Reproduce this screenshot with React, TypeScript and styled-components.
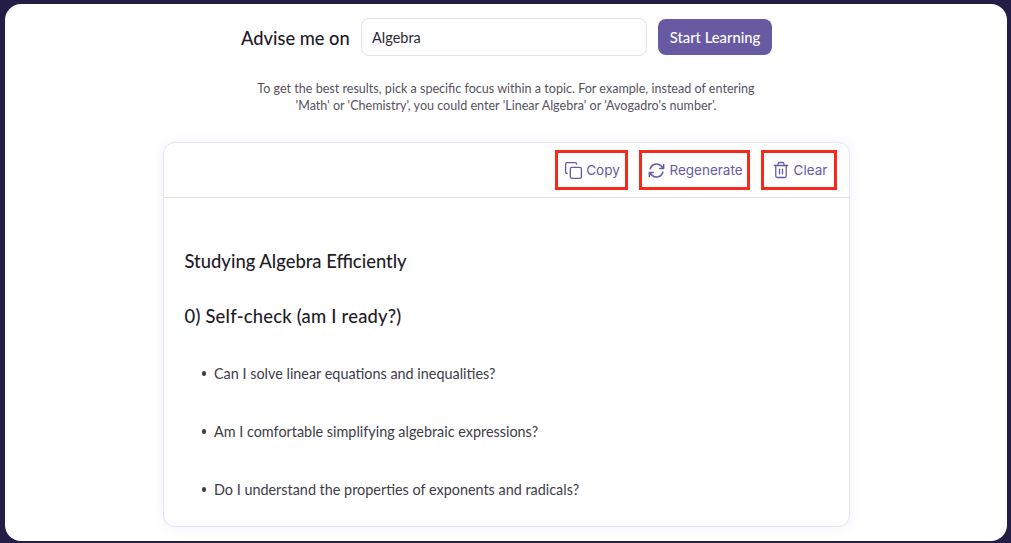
import { HiOutlineArrowPath } from "react-icons/hi2";
import { Copy, Trash2 } from "lucide-react";
import styled, { createGlobalStyle } from "styled-components";

const GlobalStyle = createGlobalStyle`
  html, body {
    margin: 0;
    height: 100%;
    background: #241d45;
    overflow: hidden;
  }
  body {
    font-family: "Lato", "Noto Sans", sans-serif;
  }
`;

const Frame = styled.div`
  box-sizing: border-box;
  width: 1011px;
  height: 543px;
  padding: 4px 4px 2px 5px;
`;

const Panel = styled.main`
  box-sizing: border-box;
  height: 100%;
  background: #ffffff;
  border-radius: 16px;
  padding-top: 14px;
  display: flex;
  flex-direction: column;
  align-items: center;
`;

const SearchRow = styled.div`
  display: flex;
  align-items: center;
  height: 38px;
  margin-left: 1px;
`;

const Label = styled.label`
  font-size: 18.3px;
  font-weight: 500;
  line-height: 24px;
  padding-top: 1px;
  color: #1d1b26;
  margin-right: 11px;
  width: 109px;
  white-space: nowrap;
`;

const TopicInput = styled.input`
  box-sizing: border-box;
  width: 286px;
  height: 38px;
  padding: 0 10px;
  border: 1px solid #e4e1f1;
  border-radius: 8px;
  background: #fefdff;
  font-family: "Lato", sans-serif;
  font-size: 14.5px;
  color: #2b2933;
  outline: none;
`;

const StartButton = styled.button`
  box-sizing: border-box;
  width: 114px;
  height: 36px;
  margin-left: 11px;
  border: none;
  border-radius: 8px;
  background: #675aa3;
  color: #ffffff;
  font-family: "Lato", sans-serif;
  font-size: 14.8px;
  font-weight: 500;
`;

const Hint = styled.p`
  margin: 24px 0 0;
  width: 520px;
  font-size: 12.57px;
  line-height: 17px;
  text-align: center;
  color: #55535e;
`;

const ResultCard = styled.section`
  box-sizing: border-box;
  width: 687px;
  height: 385px;
  margin-top: 28px;
  border: 1px solid #e6e3f4;
  border-radius: 12px;
  background: #ffffff;
  box-shadow: 0 0 12px rgba(103, 90, 163, 0.09);
  overflow: hidden;
`;

const Toolbar = styled.div`
  box-sizing: border-box;
  height: 55px;
  padding: 7px 12px 0 0;
  border-bottom: 1px solid #e2dfee;
  display: flex;
  justify-content: flex-end;
  align-items: flex-start;
  gap: 11px;
`;

const ToolButton = styled.button<{ $width: number; $gap: number }>`
  box-sizing: border-box;
  width: ${(p) => p.$width}px;
  height: 40px;
  padding: 0 0 0 2px;
  border: 3px solid #f5291c;
  background: transparent;
  color: #675aa3;
  font-family: "Inter", sans-serif;
  font-size: 13.5px;
  display: flex;
  align-items: center;
  justify-content: center;
  gap: ${(p) => p.$gap}px;
`;

const Body = styled.div`
  padding: 52px 21px 0;
`;

const Heading = styled.h2<{ $tracking?: number }>`
  margin: 0 0 33px;
  font-size: 18.4px;
  line-height: 22px;
  font-weight: 500;
  letter-spacing: ${(p) => p.$tracking ?? 0}px;
  color: #1f1d28;
`;

const Points = styled.ul`
  margin: 0;
  padding: 5px 0 0 17px;
  list-style: none;
`;

const Point = styled.li`
  margin: 0 0 41px;
  display: flex;
  align-items: center;
  gap: 8px;
  font-size: 14.4px;
  line-height: 17px;
  color: #3e3c47;

  &::before {
    content: "";
    width: 4.5px;
    height: 4.5px;
    border-radius: 50%;
    background: #3e3c47;
  }
`;

const questions = [
  "Can I solve linear equations and inequalities?",
  "Am I comfortable simplifying algebraic expressions?",
  "Do I understand the properties of exponents and radicals?",
];

const App = () => {
  return (
    <>
      <GlobalStyle />
      <Frame>
        <Panel>
          <SearchRow>
            <Label htmlFor="topic">Advise me on</Label>
            <TopicInput id="topic" defaultValue="Algebra" />
            <StartButton>Start Learning</StartButton>
          </SearchRow>
          <Hint>
            To get the best results, pick a specific focus within a topic. For example, instead of entering 'Math' or
            'Chemistry', you could enter 'Linear Algebra' or 'Avogadro's number'.
          </Hint>
          <ResultCard>
            <Toolbar>
              <ToolButton $width={73} $gap={3}>
                <Copy size={19} strokeWidth={1.7} />
                Copy
              </ToolButton>
              <ToolButton $width={111} $gap={3}>
                <HiOutlineArrowPath size={19} style={{ strokeWidth: 1.9 }} />
                Regenerate
              </ToolButton>
              <ToolButton $width={76} $gap={4}>
                <Trash2 size={18} strokeWidth={1.7} />
                Clear
              </ToolButton>
            </Toolbar>
            <Body>
              <Heading>Studying Algebra Efficiently</Heading>
              <Heading $tracking={0.22}>0) Self-check (am I ready?)</Heading>
              <Points>
                {questions.map((question) => (
                  <Point key={question}>{question}</Point>
                ))}
              </Points>
            </Body>
          </ResultCard>
        </Panel>
      </Frame>
    </>
  );
};

export default App;
